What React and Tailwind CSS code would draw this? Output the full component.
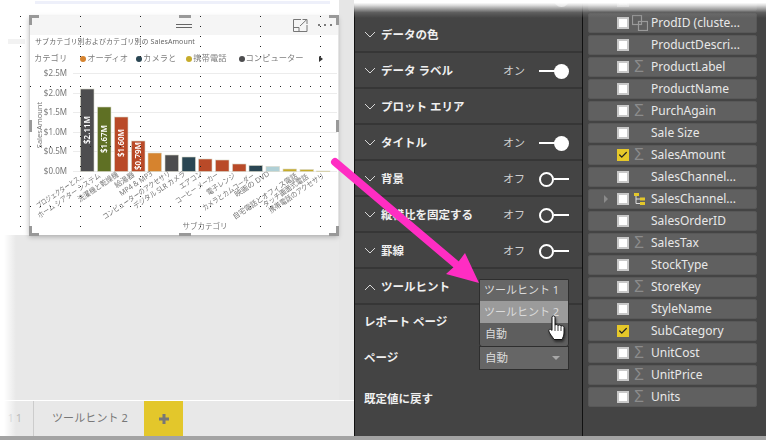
import { Check } from "lucide-react";

const jp = "font-['Noto_Sans','Noto_Sans_CJK_JP',sans-serif]";

const bars = [
  { x: 79.5, top: 89, color: "#4d4d4f", value: "$2.11M", labelY: 130 },
  { x: 96.5, top: 107, color: "#5f7024", value: "$1.67M", labelY: 139 },
  { x: 113.5, top: 117, color: "#b94a28", value: "$1.60M", labelY: 143 },
  { x: 130.5, top: 141, color: "#b94a28", value: "$0.79M", labelY: 156 },
  { x: 147, top: 153, color: "#d6832e" },
  { x: 164, top: 155, color: "#4d4d4f" },
  { x: 181, top: 157, color: "#2a4653" },
  { x: 197.5, top: 159, color: "#b94a28" },
  { x: 214.5, top: 160, color: "#b94a28" },
  { x: 231.5, top: 164, color: "#b94a28" },
  { x: 248, top: 165.5, color: "#2a4653" },
  { x: 265, top: 166.5, color: "#b0d0d6" },
  { x: 282, top: 169, color: "#c6ac2b" },
  { x: 299, top: 169.5, color: "#c6ac2b" },
  { x: 315.5, top: 171, color: "#c6ac2b" },
];

// label, end x, end y, drawn length along the slant
const xLabels = [
  ["プロジェクターとス...", 83, 178, 55],
  ["ホーム シアター システム", 100, 177, 74],
  ["洗濯機と乾燥機", 118, 176, 47],
  ["給湯器", 134, 176, 22],
  ["MP4 & MP3", 152, 175, 38],
  ["コンピューターのアクセサリ", 170, 175, 80],
  ["デジタル SLR カメラ", 185, 175, 61],
  ["エアコン", 202, 175, 26],
  ["コーヒー メーカー", 218, 176, 50],
  ["電子レンジ", 235, 177, 33],
  ["カメラとカムコーダー", 254, 177, 61],
  ["映画の DVD", 269, 175, 40],
  ["自宅電話とオフィス電話", 297, 177, 76],
  ["タッチ画面式電話", 308, 178, 53],
  ["携帯電話のアクセサリ", 324, 177, 65],
];

const yLabels = [
  ["$2.5M", 73],
  ["$2.0M", 93],
  ["$1.5M", 112],
  ["$1.0M", 132],
  ["$0.5M", 151],
  ["$0.0M", 171],
];

const legend = [
  { name: "オーディオ", color: "#d6832e", ml: "ml-[13px]" },
  { name: "カメラと", color: "#2a4653", ml: "ml-[8px]" },
  { name: "携帯電話", color: "#c6ac2b", ml: "ml-[10px]" },
  { name: "コンピューター", color: "#4d4d4f", ml: "ml-[12px]" },
];

const sections = [
  { title: "データの色" },
  { title: "データ ラベル", on: true },
  { title: "プロット エリア" },
  { title: "タイトル", on: true },
  { title: "背景", on: false },
  { title: "縦横比を固定する", on: false },
  { title: "罫線", on: false },
];

const fields = [
  { name: "ProdID (cluste...", icon: "cluster" },
  { name: "ProductDescri..." },
  { name: "ProductLabel", icon: "sigma" },
  { name: "ProductName" },
  { name: "PurchAgain", icon: "sigma" },
  { name: "Sale Size" },
  { name: "SalesAmount", icon: "sigma", checked: true },
  { name: "SalesChannel..." },
  { name: "SalesChannel...", icon: "hier", expand: true },
  { name: "SalesOrderID" },
  { name: "SalesTax", icon: "sigma" },
  { name: "StockType" },
  { name: "StoreKey", icon: "sigma" },
  { name: "StyleName" },
  { name: "SubCategory", checked: true },
  { name: "UnitCost", icon: "sigma" },
  { name: "UnitPrice", icon: "sigma" },
  { name: "Units", icon: "sigma" },
];

const Chevron = ({ up }) => (
  <svg width="12" height="8" viewBox="0 0 12 8" className="shrink-0">
    <polyline
      points={up ? "1,7 6,2 11,7" : "1,1 6,6 11,1"}
      fill="none"
      stroke="#d8d8d8"
      strokeWidth="1"
    />
  </svg>
);

const Toggle = ({ on }) =>
  on ? (
    <div className="flex items-center w-[30px]">
      <div className="w-[17px] h-[2px] bg-white" />
      <div className="w-[15px] h-[15px] rounded-full bg-white -ml-[2px]" />
    </div>
  ) : (
    <div className="flex items-center w-[30px]">
      <div className="w-[15px] h-[15px] rounded-full border-2 border-white" />
      <div className="w-[15px] h-[2px] bg-white" />
    </div>
  );

const SectionRow = ({ title, on }) => (
  <div className="h-[36px] border-b-2 border-[#363636] flex items-center pt-[2px] pl-[9px] pr-[13px]">
    <Chevron />
    <span className="ml-[5px] text-[11.5px] font-bold text-[#f0f0f0]">{title}</span>
    {on !== undefined && (
      <>
        <span className="ml-auto w-[36px] text-[11px] text-[#cfcfcf]">{on ? "オン" : "オフ"}</span>
        <Toggle on={on} />
      </>
    )}
  </div>
);

const FieldIcon = ({ type }) => {
  if (type === "sigma") {
    return <span className="text-[16px] leading-none text-[#8c8c8c] font-['Liberation_Sans',sans-serif]">Σ</span>;
  }
  if (type === "cluster") {
    return (
      <svg width="16" height="16" viewBox="0 0 16 16" className="-ml-[2px]">
        <rect x="0.5" y="0.5" width="9" height="9" fill="none" stroke="#9a9a9a" strokeWidth="1.2" />
        <rect x="6.5" y="6.5" width="9" height="9" fill="none" stroke="#9a9a9a" strokeWidth="1.2" />
      </svg>
    );
  }
  if (type === "hier") {
    return (
      <svg width="12" height="12" viewBox="0 0 12 12">
        <rect x="0" y="0" width="5" height="3" fill="#e3c72b" />
        <rect x="6" y="4.5" width="5" height="3" fill="#e3c72b" />
        <rect x="6" y="9" width="5" height="3" fill="#e3c72b" />
        <path d="M2 3V10.5H6M2 6H6" fill="none" stroke="#ddd" strokeWidth="1" />
      </svg>
    );
  }
  return null;
};

const Checkbox = ({ checked }) =>
  checked ? (
    <div className="w-[12px] h-[12px] bg-[#e6c829] flex items-center justify-center shrink-0">
      <Check size={10} strokeWidth={3} color="#222" />
    </div>
  ) : (
    <div className="w-[12px] h-[12px] bg-white border-2 border-[#c8c8c8] shrink-0" />
  );

const FieldRow = ({ name, icon, checked, expand }) => (
  <div className="h-[20px] shrink-0 bg-[#606060] rounded-[2px] border border-[#585858] flex items-center relative pl-[28px]">
    {expand && (
      <div className="absolute left-[15px] top-[5px] w-0 h-0 border-y-[4px] border-y-transparent border-l-[4px] border-l-[#8a8a8a]" />
    )}
    <Checkbox checked={checked} />
    <div className="w-[22px] pl-[5px] flex items-center">
      <FieldIcon type={icon} />
    </div>
    <span className="text-[12px] text-[#e8e8e8] whitespace-nowrap">{name}</span>
  </div>
);

const Handle = ({ className }) => <div className={`absolute bg-[#999999] ${className}`} />;

const Corner = ({ className }) => <div className={`absolute w-[10px] h-[10px] border-[#999999] ${className}`} />;

const ChartPlot = () => (
  <svg width="309" height="168" viewBox="29 67 309 168" className="block">
    {yLabels.map(([label, y]) => (
      <g key={label}>
        <line x1="72" x2="336" y1={y + 0.5} y2={y + 0.5} stroke="#ececec" />
        <text x="66" y={y + 3} textAnchor="end" fontSize="8" fill="#777">
          {label}
        </text>
      </g>
    ))}
    {bars.map((b) => (
      <g key={b.x}>
        <rect
          x={b.x}
          y={b.top}
          width="13.5"
          height={171.5 - b.top}
          fill={b.color}
          stroke="#d8d8c8"
          strokeWidth="0.6"
        />
        {b.value && (
          <text
            transform={`translate(${b.x + 9.5} ${b.labelY}) rotate(-90)`}
            textAnchor="middle"
            fontSize="8"
            fontWeight="600"
            fill="#fff"
          >
            {b.value}
          </text>
        )}
      </g>
    ))}
    {xLabels.map(([label, x, y, len]) => (
      <text
        key={label}
        transform={`translate(${x} ${y}) rotate(-34)`}
        textAnchor="end"
        fontSize="7.5"
        textLength={len}
        lengthAdjust="spacingAndGlyphs"
        fill="#777"
      >
        {label}
      </text>
    ))}
    <text transform="translate(41 125) rotate(-90)" textAnchor="middle" fontSize="7.5" fill="#777">
      SalesAmount
    </text>
    <text x="204" y="229" textAnchor="middle" fontSize="7.5" fill="#777">
      サブカテゴリ
    </text>
  </svg>
);

const Chart = () => (
  <div className="relative ml-[25px] mt-[16px] w-[309px] h-[219px] bg-white border-l border-[#cfcfcf] shadow-[0_2px_5px_rgba(0,0,0,0.25)]">
    <div className="blur-[0.3px]">
      <div className="h-[19px] bg-[#f5f5f5] relative flex items-center justify-center">
        <div className="flex flex-col gap-[2px]">
          <div className="w-[16px] h-px bg-[#666]" />
          <div className="w-[16px] h-px bg-[#666]" />
        </div>
        <svg width="15" height="13" viewBox="0 0 15 13" className="absolute left-[263px] top-[3px]">
          <path d="M8 .5H.5V12.5H14V6" fill="none" stroke="#777" />
          <path d="M.5 8.5H6V12.5M7 7L13.5 .8M9.5 .5H14V5" fill="none" stroke="#777" />
        </svg>
        <div className="absolute left-[288px] top-[8px] flex gap-[4px]">
          <div className="w-[2px] h-[2px] rounded-full bg-[#555]" />
          <div className="w-[2px] h-[2px] rounded-full bg-[#555]" />
          <div className="w-[2px] h-[2px] rounded-full bg-[#555]" />
        </div>
      </div>
      <div className="h-[13px] pl-[5px] text-[7px] leading-[13px] tracking-[0.1px] text-[#666] whitespace-nowrap">
        サブカテゴリ別およびカテゴリ別の SalesAmount
      </div>
      <div className="h-[19px] pl-[4px] pt-[2px] flex items-center text-[8.3px] text-[#808080] whitespace-nowrap">
        <span>カテゴリ</span>
        {legend.map((l) => (
          <div key={l.name} className={`flex items-center ${l.ml}`}>
            <div className="w-[6px] h-[6px] rounded-full mr-[1px]" style={{ background: l.color }} />
            <span>{l.name}</span>
          </div>
        ))}
        <div className="ml-[15px] w-0 h-0 border-y-[3px] border-y-transparent border-l-[4px] border-l-[#333]" />
      </div>
      <ChartPlot />
    </div>
    <Corner className="-left-px -top-px border-t-[3px] border-l-[3px]" />
    <Corner className="-right-px -top-px border-t-[3px] border-r-[3px]" />
    <Corner className="-left-px -bottom-px border-b-[3px] border-l-[3px]" />
    <Corner className="-right-px -bottom-px border-b-[3px] border-r-[3px]" />
    <Handle className="left-[149px] -top-px w-[12px] h-[3px]" />
    <Handle className="left-[149px] -bottom-px w-[12px] h-[3px]" />
    <Handle className="-left-px top-[104px] w-[3px] h-[12px]" />
    <Handle className="-right-px top-[104px] w-[3px] h-[12px]" />
  </div>
);

// alignment dots of the report canvas, drawn over the visual
const DotGrid = () => {
  const dots = [];
  [20, 80, 140, 200, 260, 320].forEach((x) => {
    for (let y = 16; y <= 226; y += 10) dots.push([x, y]);
  });
  [86, 146, 206].forEach((y) => {
    for (let x = 20; x <= 336; x += 10) dots.push([x, y]);
  });
  return (
    <svg width="354" height="240" className="absolute left-0 top-0 pointer-events-none">
      {dots.map(([x, y]) => (
        <rect key={`${x}-${y}`} x={x} y={y} width="1" height="1" fill="#222" />
      ))}
    </svg>
  );
};

const Arrow = () => (
  <svg width="766" height="440" className="absolute left-0 top-0 pointer-events-none">
    <line x1="335" y1="162" x2="458" y2="266" stroke="#ff2dc3" strokeWidth="8" strokeLinecap="round" />
    <polygon points="479,283 446,274 456,265 465,253" fill="#ff2dc3" />
  </svg>
);

const HandCursor = () => (
  <svg
    width="18"
    height="26"
    viewBox="0 0 18 26"
    className="absolute left-[548px] top-[315px] drop-shadow-[1px_2px_1px_rgba(0,0,0,0.5)]"
  >
    <path
      d="M4 2.2C4 .4 7 .4 7 2.2V10.5C7.5 9.2 10 9.2 10 10.8C10.5 9.6 13 9.7 13 11.3C13.6 10.4 16 10.6 16 12.3V18C16 21 14.6 23 14 24.5H6C5 22.5 1 18 .8 16C.6 14.2 2.4 13.6 4 15.4Z"
      fill="#fff"
      stroke="#111"
      strokeWidth="1"
    />
    <path d="M7 11V16M10 11V16M13 11.5V16" stroke="#111" strokeWidth="0.8" />
  </svg>
);

const TooltipMenu = () => (
  <div className="absolute left-[479px] top-[279px] w-[90px] h-[68px] bg-[#5e5e5e] border border-[#2e2e2e] rounded-b-[3px] text-[11px] text-[#dcdcdc] whitespace-nowrap flex flex-col">
    <div className="h-[21px] bg-[#666666] flex items-center pl-[4px]">ツールヒント 1</div>
    <div className="h-[22px] bg-[#9b9b9b] flex items-center pl-[4px]">ツールヒント 2</div>
    <div className="flex-1 flex items-center pl-[5px]">自動</div>
  </div>
);

export default function App() {
  return (
    <div className={`relative w-[766px] h-[440px] overflow-hidden bg-white flex flex-col ${jp}`}>
      <div className="h-[436px] flex">
        {/* report canvas */}
        <div className="w-[354px] pl-[4px] flex flex-col bg-white relative">
          <div className="flex-1 bg-[linear-gradient(to_bottom,#ffffff_0,#ffffff_235px,#e8e8e8_235px)] relative">
            <div className="absolute left-[31px] top-[1px] w-[295px] h-[3px] bg-[#eef0fa]" />
            <div className="absolute left-[335px] top-0 bottom-0 w-[15px] bg-[#e6e6e6]" />
            <div className="absolute left-[4px] top-[39px] w-[17px] h-[5px] bg-[#f2f2f2]" />
            <div className="relative">
              <Chart />
            </div>
          </div>
          {/* page tabs */}
          <div className="h-[36px] border-t border-white bg-[#e8e8e8] flex items-stretch text-[11px] text-[#777]">
            <div className="w-[30px] border-r border-[#cccccc] flex items-center justify-end pr-[9px] text-[#bbb] tracking-[2px]">
              11
            </div>
            <div className="w-[110px] flex items-center pl-[18px] tracking-[0.1px] whitespace-nowrap">ツールヒント 2</div>
            <div className="w-[39px] bg-[#e3c72b] flex items-center justify-center text-[#777]">
              <svg width="12" height="12" viewBox="0 0 12 12">
                <path d="M6 1V11M1 6H11" stroke="#777" strokeWidth="3" />
              </svg>
            </div>
          </div>
          <div className="absolute left-[4px] top-[235px] bottom-0 w-[12px] bg-gradient-to-r from-white to-transparent" />
          <DotGrid />
        </div>

        {/* format pane */}
        <div className="w-[229px] bg-[#444444] border-l border-[#111] border-r flex flex-col relative overflow-hidden">
          <div className="h-[17px] relative">
            <div className="absolute left-0 right-0 -top-[19px] h-[36px] flex items-center justify-end pr-[13px]">
              <Toggle on />
            </div>
          </div>
          {sections.map((s) => (
            <SectionRow key={s.title} {...s} />
          ))}
          <div className="h-[36px] border-b-2 border-[#363636] flex items-center pt-[2px] pl-[9px]">
            <Chevron up />
            <span className="ml-[5px] text-[11.5px] font-bold text-[#f0f0f0]">ツールヒント</span>
          </div>
          <div className="pl-[9px] pr-[13px] text-[11.5px] font-bold text-[#f0f0f0] flex flex-col">
            <div className="h-[34px] flex items-center">レポート ページ</div>
            <div className="h-[37px] flex items-center justify-between">
              <span>ページ</span>
              <div className="w-[90px] h-[24px] bg-[#666666] border border-[#2e2e2e] flex items-center pl-[5px] pr-[8px] font-normal text-[#dcdcdc]">
                自動
                <div className="ml-auto w-0 h-0 border-x-[4px] border-x-transparent border-t-[4px] border-t-[#a8a8a8]" />
              </div>
            </div>
            <div className="h-[43px] pt-[2px] flex items-center">既定値に戻す</div>
          </div>
        </div>

        {/* fields pane */}
        <div className="flex-1 bg-[#444444] pl-[5px] pr-[9px] flex flex-col gap-[2px] relative overflow-hidden">
          <div className="-mt-[9px] shrink-0">
            <FieldRow name="" />
          </div>
          {fields.map((f, i) => (
            <FieldRow key={i} {...f} />
          ))}
        </div>

        <div className="absolute left-[354px] right-0 top-0 h-[18px] bg-[linear-gradient(to_bottom,rgba(255,255,255,1)_15%,rgba(235,235,235,0.9)_30%,rgba(120,120,120,0.5)_70%,rgba(68,68,68,0)_100%)]" />
      </div>
      <div className="h-[4px] bg-[#a3a3a3]" />

      <Arrow />
      <TooltipMenu />
      <HandCursor />
    </div>
  );
}
